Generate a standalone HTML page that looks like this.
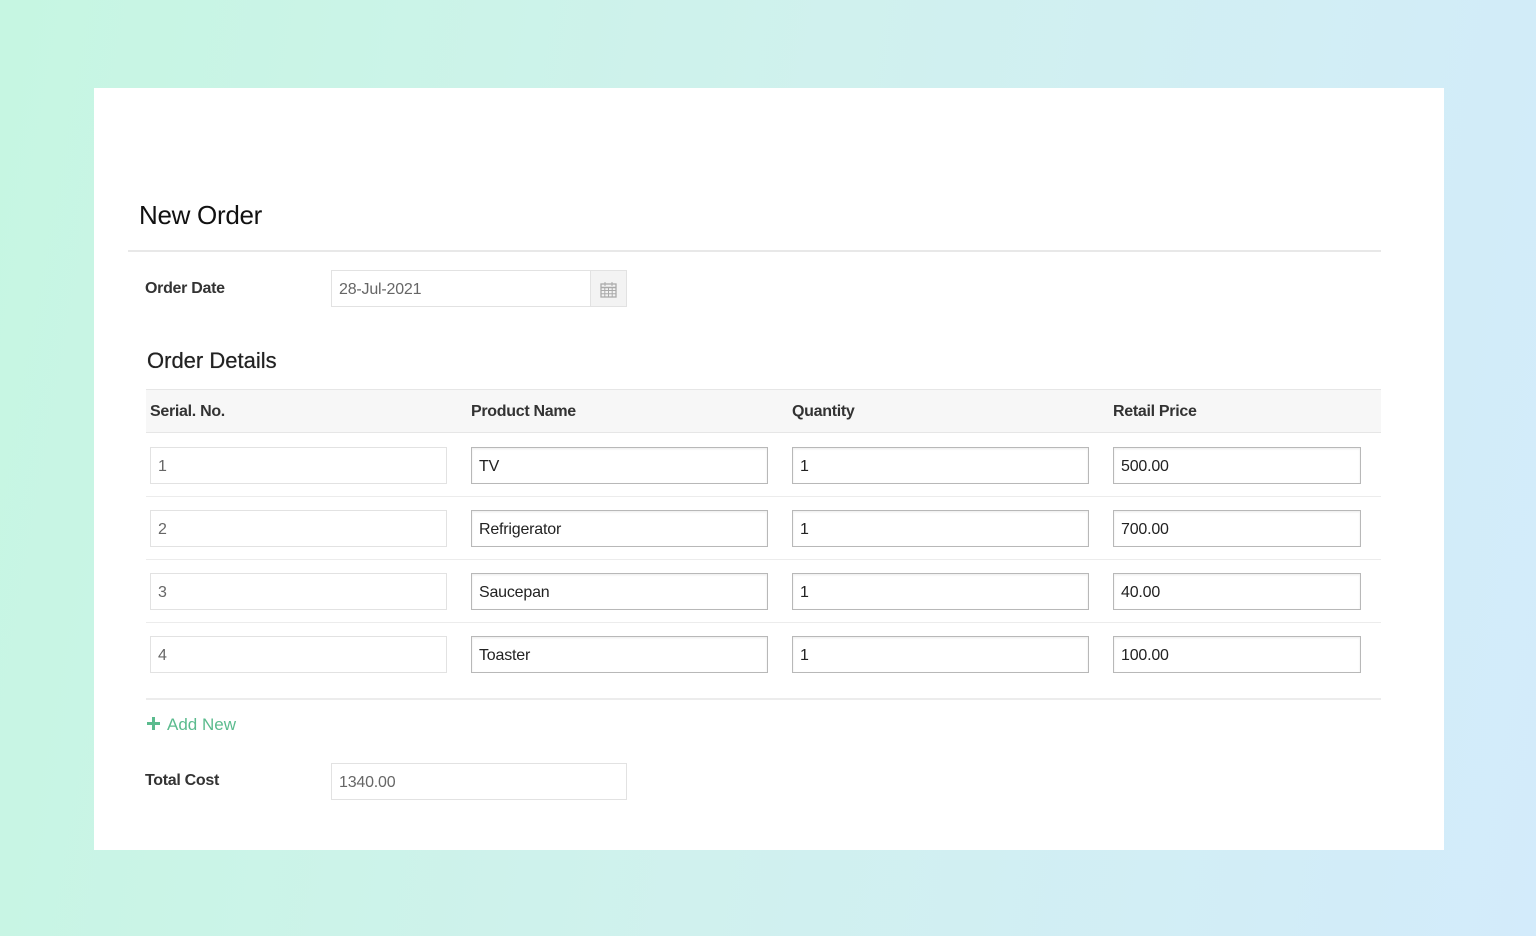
<!DOCTYPE html>
<html><head><meta charset="utf-8"><style>
*{box-sizing:border-box;margin:0;padding:0}
body{width:1536px;height:936px;overflow:hidden;position:relative;font-family:"Liberation Sans",sans-serif;background:linear-gradient(100deg,#c6f6e2 0%,#d0f1ee 50%,#d3ebfb 100%)}
.card{position:absolute;left:94px;top:88px;width:1350px;height:762px;background:#fff}
.a{position:absolute}
.lbl{font-size:16px;font-weight:bold;color:#333;letter-spacing:-0.3px}
.inp{position:absolute;height:37px;border:1px solid #e2e2e2;font-size:16px;color:#666;padding-left:7px;line-height:37px;background:#fff;letter-spacing:-0.2px}
.inp.d{border:1px solid #b8b8b8;color:#222;box-shadow:inset 0 1px 2px rgba(0,0,0,.08)}
.th{position:absolute;top:403px;font-size:16px;font-weight:bold;color:#333;letter-spacing:-0.3px}
.hr{position:absolute;left:146px;width:1235px;height:1px;background:#ececec}
</style></head><body>
<div class="card"></div>
<div class="a" style="left:139px;top:200px;font-size:26px;color:#111;letter-spacing:-0.3px">New Order</div>
<div class="a" style="left:128px;top:250px;width:1253px;height:2px;background:#e8e8e8"></div>
<div class="a lbl" style="left:145px;top:280px">Order Date</div>
<div class="inp" style="left:331px;top:270px;width:260px;height:37px">28-Jul-2021</div>
<div class="a" style="left:590px;top:270px;width:37px;height:37px;background:#f3f3f3;border:1px solid #e2e2e2"></div>
<svg class="a" style="left:600px;top:281px" width="17" height="17" viewBox="0 0 17 17"><rect x="1" y="3" width="15" height="13" fill="none" stroke="#aaa" stroke-width="1.3"/><line x1="1" y1="6.5" x2="16" y2="6.5" stroke="#aaa" stroke-width="1.5"/><path d="M5 1v4M12 1v4M1 9.5h15M1 12.8h15M4.8 6.5v9.5M8.5 6.5v9.5M12.2 6.5v9.5" stroke="#aaa" stroke-width="1"/></svg>
<div class="a" style="left:147px;top:348px;font-size:22px;color:#222;font-weight:500;text-shadow:0 0 0.5px #222">Order Details</div>
<div class="a" style="left:146px;top:389px;width:1235px;height:44px;background:#f7f7f7;border-top:1px solid #e6e6e6;border-bottom:1px solid #e6e6e6"></div>
<div class="th" style="left:150px">Serial. No.</div>
<div class="th" style="left:471px">Product Name</div>
<div class="th" style="left:792px">Quantity</div>
<div class="th" style="left:1113px">Retail Price</div>

<div class="inp" style="left:150px;top:447px;width:297px">1</div>
<div class="inp d" style="left:471px;top:447px;width:297px">TV</div>
<div class="inp d" style="left:792px;top:447px;width:297px">1</div>
<div class="inp d" style="left:1113px;top:447px;width:248px">500.00</div>
<div class="hr" style="top:496px"></div>
<div class="inp" style="left:150px;top:510px;width:297px">2</div>
<div class="inp d" style="left:471px;top:510px;width:297px">Refrigerator</div>
<div class="inp d" style="left:792px;top:510px;width:297px">1</div>
<div class="inp d" style="left:1113px;top:510px;width:248px">700.00</div>
<div class="hr" style="top:559px"></div>
<div class="inp" style="left:150px;top:573px;width:297px">3</div>
<div class="inp d" style="left:471px;top:573px;width:297px">Saucepan</div>
<div class="inp d" style="left:792px;top:573px;width:297px">1</div>
<div class="inp d" style="left:1113px;top:573px;width:248px">40.00</div>
<div class="hr" style="top:622px"></div>
<div class="inp" style="left:150px;top:636px;width:297px">4</div>
<div class="inp d" style="left:471px;top:636px;width:297px">Toaster</div>
<div class="inp d" style="left:792px;top:636px;width:297px">1</div>
<div class="inp d" style="left:1113px;top:636px;width:248px">100.00</div>
<div class="hr" style="top:698px;height:2px"></div>

<svg class="a" style="left:147px;top:717px" width="13" height="13" viewBox="0 0 13 13"><path d="M6.5 0v13M0 6.5h13" stroke="#5bbb8e" stroke-width="3"/></svg>
<div class="a" style="left:167px;top:715px;font-size:17px;color:#5bbb8e">Add New</div>
<div class="a lbl" style="left:145px;top:772px">Total Cost</div>
<div class="inp" style="left:331px;top:763px;width:296px">1340.00</div>
</body></html>
